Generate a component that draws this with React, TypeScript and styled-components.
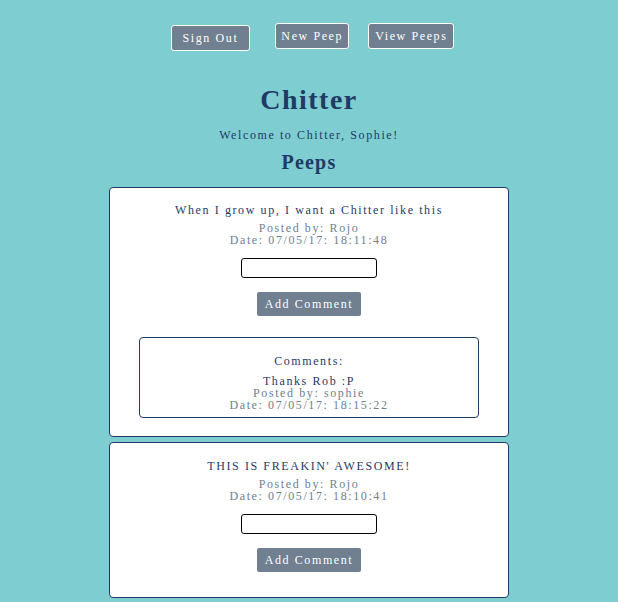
import React from "react";
import styled, { createGlobalStyle } from "styled-components";

const Global = createGlobalStyle`
  html, body { margin: 0; padding: 0; }
  body {
    background: #7ecdd1;
    font-family: "Liberation Serif", "Times New Roman", serif;
    color: #1f3a66;
    letter-spacing: 1.6px;
  }
`;

const Page = styled.div`
  display: flex;
  flex-direction: column;
  align-items: center;
  padding-top: 23px;
`;

const Nav = styled.nav`
  display: flex;
  align-items: flex-start;
  gap: 19px;
  margin-left: 7px;
`;

const NavButton = styled.button<{ $form?: boolean; $pad?: number }>`
  font-family: inherit;
  font-size: 12px;
  letter-spacing: 1.6px;
  color: #fff;
  background: #708090;
  border: 1px solid #fff;
  border-radius: 3px;
  height: 26px;
  padding: 0 ${(p) => p.$pad ?? 5}px;
  white-space: nowrap;
  margin-top: ${(p) => (p.$form ? 2 : 0)}px;
  margin-right: ${(p) => (p.$form ? 6 : 0)}px;
`;

const Title = styled.h1`
  font-size: 28px;
  font-weight: bold;
  letter-spacing: 1.5px;
  margin: 33px 0 0;
  line-height: 32px;
`;

const Welcome = styled.p`
  font-size: 12px;
  margin: 12px 0 0;
`;

const SubTitle = styled.h2`
  font-size: 20px;
  font-weight: bold;
  letter-spacing: 1.2px;
  margin: 7px 0 0;
  line-height: 24px;
`;

const List = styled.div`
  display: flex;
  flex-direction: column;
  gap: 5px;
  margin-top: 13px;
  width: 400px;
`;

const Card = styled.div<{ $top: number; $pad: number }>`
  background: #fff;
  border: 1px solid #1f3a66;
  border-radius: 4px;
  display: flex;
  flex-direction: column;
  align-items: center;
  padding: ${(p) => p.$top}px 0 ${(p) => p.$pad}px;
`;

const PeepText = styled.div`
  font-size: 12px;
  line-height: 14px;
`;

const Meta = styled.div`
  font-size: 12px;
  line-height: 12px;
  color: #708090;
  text-align: center;
  margin-top: 5px;
`;

const Input = styled.input`
  width: 136px;
  height: 20px;
  box-sizing: border-box;
  border: 1px solid #000;
  border-radius: 3px;
  margin-top: 12px;
`;

const AddButton = styled.button`
  font-family: inherit;
  font-size: 12px;
  letter-spacing: 1.6px;
  color: #fff;
  background: #708090;
  border: none;
  border-radius: 2px;
  width: 104px;
  height: 24px;
  padding: 0;
  white-space: nowrap;
  margin-top: 14px;
`;

const Comments = styled.div`
  width: 340px;
  box-sizing: border-box;
  border: 1px solid #1f3a66;
  border-radius: 4px;
  margin-top: 21px;
  padding: 16px 0 6px;
  display: flex;
  flex-direction: column;
  align-items: center;
`;

const CommentsHead = styled.div`
  font-size: 12px;
  line-height: 14px;
  margin-bottom: 7px;
`;

const CommentText = styled.div`
  font-size: 12px;
  line-height: 12px;
`;

const CommentMeta = styled.div`
  font-size: 12px;
  line-height: 12px;
  color: #708090;
  text-align: center;
`;

type Peep = {
  text: string;
  author: string;
  date: string;
  comments: { text: string; author: string; date: string }[];
};

const peeps: Peep[] = [
  {
    text: "When I grow up, I want a Chitter like this",
    author: "Rojo",
    date: "07/05/17: 18:11:48",
    comments: [{ text: "Thanks Rob :P", author: "sophie", date: "07/05/17: 18:15:22" }],
  },
  {
    text: "THIS IS FREAKIN' AWESOME!",
    author: "Rojo",
    date: "07/05/17: 18:10:41",
    comments: [],
  },
];

export default function App() {
  return (
    <>
      <Global />
      <Page>
        <Nav>
          <NavButton $form $pad={11}>Sign Out</NavButton>
          <NavButton>New Peep</NavButton>
          <NavButton $pad={6}>View Peeps</NavButton>
        </Nav>
        <Title>Chitter</Title>
        <Welcome>Welcome to Chitter, Sophie!</Welcome>
        <SubTitle>Peeps</SubTitle>
        <List>
          {peeps.map((p, i) => {
            const hasComments = p.comments.length > 0;
            return (
              <Card key={i} $top={hasComments ? 15 : 16} $pad={hasComments ? 18 : 25}>
                <PeepText>{p.text}</PeepText>
                <Meta>
                  Posted by: {p.author}
                  <br />
                  Date: {p.date}
                </Meta>
                <Input type="text" />
                <AddButton>Add Comment</AddButton>
                {hasComments && (
                  <Comments>
                    <CommentsHead>Comments:</CommentsHead>
                    {p.comments.map((c, j) => (
                      <React.Fragment key={j}>
                        <CommentText>{c.text}</CommentText>
                        <CommentMeta>
                          Posted by: {c.author}
                          <br />
                          Date: {c.date}
                        </CommentMeta>
                      </React.Fragment>
                    ))}
                  </Comments>
                )}
              </Card>
            );
          })}
        </List>
      </Page>
    </>
  );
}
